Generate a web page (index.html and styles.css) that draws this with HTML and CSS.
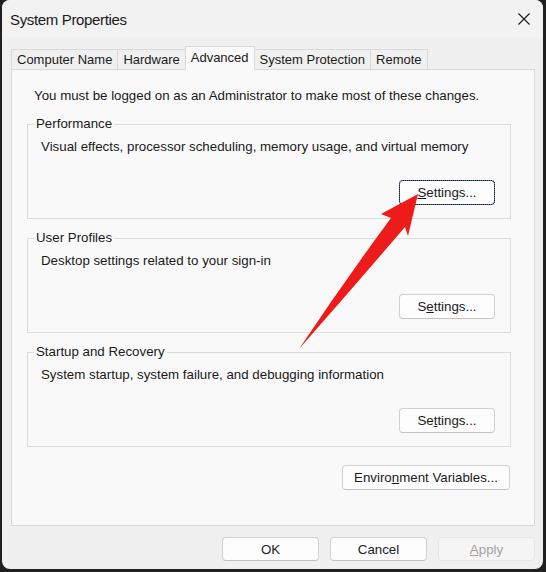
FILE: index.html
```html
<!DOCTYPE html>
<html lang="en">
<head>
<meta charset="utf-8">
<title>System Properties</title>
<link rel="stylesheet" href="styles.css">
</head>
<body>
<div class="window">
  <header class="titlebar">
    <span class="title">System Properties</span>
    <button class="close" aria-label="Close">
      <svg width="12" height="12" viewBox="0 0 12 12"><path d="M0.5 0.5 L11.5 11.5 M11.5 0.5 L0.5 11.5" stroke="#1a1a1a" stroke-width="1.1" fill="none"/></svg>
    </button>
  </header>

  <nav class="tabs">
    <span class="tab">Computer Name</span>
    <span class="tab">Hardware</span>
    <span class="tab active">Advanced</span>
    <span class="tab">System Protection</span>
    <span class="tab">Remote</span>
  </nav>

  <section class="panel">
    <p class="notice">You must be logged on as an Administrator to make most of these changes.</p>

    <fieldset class="group">
      <legend>Performance</legend>
      <p class="desc">Visual effects, processor scheduling, memory usage, and virtual memory</p>
      <div class="group-actions"><button class="btn focused"><u>S</u>ettings...</button></div>
    </fieldset>

    <fieldset class="group">
      <legend>User Profiles</legend>
      <p class="desc">Desktop settings related to your sign-in</p>
      <div class="group-actions"><button class="btn">S<u>e</u>ttings...</button></div>
    </fieldset>

    <fieldset class="group">
      <legend>Startup and Recovery</legend>
      <p class="desc">System startup, system failure, and debugging information</p>
      <div class="group-actions"><button class="btn">Se<u>t</u>tings...</button></div>
    </fieldset>

    <div class="env-row"><button class="btn env">Enviro<u>n</u>ment Variables...</button></div>
  </section>

  <footer class="dialog-buttons">
    <button class="btn wide">OK</button>
    <button class="btn wide">Cancel</button>
    <button class="btn wide disabled"><u>A</u>pply</button>
  </footer>
</div>

<svg class="callout" width="546" height="572" viewBox="0 0 546 572" aria-hidden="true">
  <path d="M418 194 L381 214 L391 218 Q343 283 299 349 Q351 290 405 227 L408 236 Z" fill="#ee1b1b"/>
</svg>
</body>
</html>
```

FILE: styles.css
```css
html, body {
  margin: 0;
  height: 572px;
}

body {
  position: relative;
  background: #202020;
  font-family: "Liberation Sans", Arial, sans-serif;
  font-size: 13px;
  color: #1a1a1a;
  overflow: hidden;
}

.window {
  margin-left: 2px;
  width: 541px;
  height: 569px;
  background: #f0f0f0;
  border-radius: 8px;
  overflow: hidden;
  display: flex;
  flex-direction: column;
}

/* Title bar */
.titlebar {
  height: 38px;
  display: flex;
  align-items: center;
  padding-left: 8px;
  background: #f2f2f2;
}

.title {
  flex: 1;
  font-size: 15px;
  letter-spacing: -0.35px;
  color: #1a1a1a;
}

.close {
  width: 38px;
  height: 38px;
  border: none;
  background: transparent;
  padding: 0;
  display: flex;
  align-items: center;
  justify-content: center;
}

/* Tabs */
.tabs {
  display: flex;
  align-items: flex-end;
  height: 23px;
  margin: 8px 0 0 9px;
  position: relative;
  z-index: 1;
}

.tab {
  box-sizing: border-box;
  height: 20px;
  display: flex;
  align-items: center;
  padding: 0 5px;
  border: 1px solid #d9d9d9;
  border-bottom: none;
  margin-right: -1px;
  background: #f0f0f0;
  white-space: nowrap;
}

.tab.active {
  height: 24px;
  margin-bottom: -1px;
  padding-bottom: 2px;
  background: #f9f9f9;
  position: relative;
  z-index: 2;
}

/* Tab page */
.panel {
  box-sizing: border-box;
  height: 457px;
  margin: 0 8px 0 9px;
  border: 1px solid #d9d9d9;
  background: #f9f9f9;
  padding: 18px 23px 0 15px;
  display: flex;
  flex-direction: column;
  font-size: 13.3px;
}

.notice {
  margin: 0 0 12px 7px;
  line-height: 16px;
}

.group {
  margin: 0 0 11px;
  padding: 7px 15px 13px 13px;
  border: 1px solid #dcdcdc;
  min-width: 0;
}

.group:last-of-type {
  margin-bottom: 18px;
}

.group legend {
  padding: 0 2px;
  margin-left: -7px;
  line-height: 16px;
}

.desc {
  margin: 0;
  line-height: 16px;
}

.group-actions {
  display: flex;
  justify-content: flex-end;
  margin-top: 25px;
}

/* Buttons */
.btn {
  box-sizing: border-box;
  width: 96px;
  height: 25px;
  padding: 0;
  font: inherit;
  color: #1a1a1a;
  background: #fdfdfd;
  border: 1px solid #d0d0d0;
  border-bottom-color: #c2c2c2;
  border-radius: 4px;
}

.btn.focused {
  border: 1px solid #4f7f9e;
  outline: 1px dotted #111;
  outline-offset: -1px;
}

.env-row {
  display: flex;
  justify-content: flex-end;
  padding-right: 1px;
}

.btn.env {
  width: 168px;
}

.dialog-buttons {
  display: flex;
  justify-content: flex-end;
  gap: 11px;
  margin-top: 11px;
  padding-right: 8px;
  font-size: 13.3px;
}

.btn.wide {
  width: 97px;
  height: 24px;
}

.btn.disabled {
  background: #f5f5f5;
  border-color: #e6e6e6;
  color: #a2a2a2;
}

/* Red pointer drawn over the dialog */
.callout {
  position: absolute;
  left: 0;
  top: 0;
  pointer-events: none;
}
```
